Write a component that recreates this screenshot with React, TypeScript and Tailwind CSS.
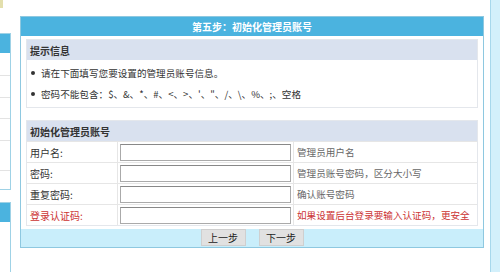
const font = { fontFamily: '"Noto Sans CJK SC", "Noto Sans", sans-serif' };

const rows = [
  { label: '用户名:', hint: '管理员用户名', red: false, type: 'text' },
  { label: '密码:', hint: '管理员账号密码，区分大小写', red: false, type: 'password' },
  { label: '重复密码:', hint: '确认账号密码', red: false, type: 'password' },
  { label: '登录认证码:', hint: '如果设置后台登录要输入认证码，更安全', red: true, type: 'text' },
];

function SideBox() {
  return (
    <div className="flex flex-col w-[11px] shrink-0 pt-[33px]">
      <div className="border border-l-0 border-[#9fd2e6] h-[157px] flex flex-col">
        <div className="h-[19px] bg-[#4bb3df]" />
        <div className="h-[23px] border-b border-[#e3e3e3]" />
        <div className="h-[22px] border-b border-[#e3e3e3]" />
        <div className="h-[21px] border-b border-[#e3e3e3]" />
        <div className="h-[22px] border-b border-[#e3e3e3]" />
        <div className="h-[30px] border-b border-[#e3e3e3]" />
      </div>
      <div className="mt-[12px] border border-l-0 border-b-0 border-[#9fd2e6] flex-1 flex flex-col">
        <div className="h-[19px] bg-[#4bb3df]" />
      </div>
    </div>
  );
}

export default function App() {
  return (
    <div className="w-[500px] h-[272px] bg-white flex text-[9.6px] text-[#333] overflow-hidden relative" style={font}>
      <div className="absolute left-0 top-0 w-[3px] h-[8px] bg-[#d7d28a] opacity-70" />
      <SideBox />

      <div className="ml-[9px] mt-[16px] w-[464px] h-[232px] border border-[#8ec8e0] flex flex-col shrink-0">
        <div className="h-[21px] bg-[#4bb3df] text-white text-[10px] font-bold flex items-center justify-center">
          第五步：初始化管理员账号
        </div>

        <div className="bg-white px-[5px] pt-[3px] pb-[3px] flex flex-col">
          <div className="border border-[#e4e7ec]">
            <div className="h-[20px] bg-[#d9e1ef] text-[10px] font-bold flex items-center pl-[3px]">提示信息</div>
            <ul className="h-[47px] flex flex-col justify-center gap-[6px] pl-[4px]">
              <li className="flex items-center h-[15px]">
                <span className="w-[4px] h-[4px] rounded-full bg-[#333] mr-[6px]" />
                请在下面填写您要设置的管理员账号信息。
              </li>
              <li className="flex items-center h-[15px]">
                <span className="w-[4px] h-[4px] rounded-full bg-[#333] mr-[6px]" />
                密码不能包含：$、&amp;、*、#、&lt;、&gt;、'、"、/、\、%、;、空格
              </li>
            </ul>
          </div>

          <div className="mt-[12px] border border-[#e4e7ec]">
            <div className="h-[20px] bg-[#d9e1ef] text-[10px] font-bold flex items-center pl-[3px]">初始化管理员账号</div>
            {rows.map((r) => (
              <div key={r.label} className="flex h-[21px] border-t border-[#e6e6e6]">
                <div className={`w-[91px] border-r border-[#e6e6e6] flex items-center pl-[3px] text-[10px] ${r.red ? 'text-[#cc3333]' : ''}`}>
                  {r.label}
                </div>
                <div className="w-[176px] border-r border-[#e6e6e6] flex items-center pl-[2px]">
                  <input
                    type={r.type}
                    className="w-[171px] h-[17px] border border-[#aaa] border-t-[#888] bg-white outline-none"
                  />
                </div>
                <div className={`flex items-center pl-[3px] whitespace-nowrap ${r.red ? 'text-[#cc3333]' : 'text-[#666]'}`}>{r.hint}</div>
              </div>
            ))}
          </div>
        </div>

        <div className="flex-1 bg-[#c9eefb] flex items-center justify-center gap-[13px] pb-[1px]">
          <button className="w-[45px] h-[17px] bg-[#e1e1e1] border border-[#cfcfcf] text-[10px] leading-none text-[#222]">上一步</button>
          <button className="w-[45px] h-[17px] bg-[#e1e1e1] border border-[#cfcfcf] text-[10px] leading-none text-[#222]">下一步</button>
        </div>
      </div>

      <div className="ml-[6px] flex-1 bg-[#d3f0fb] border-l border-[#a7d8ec]" />
    </div>
  );
}
